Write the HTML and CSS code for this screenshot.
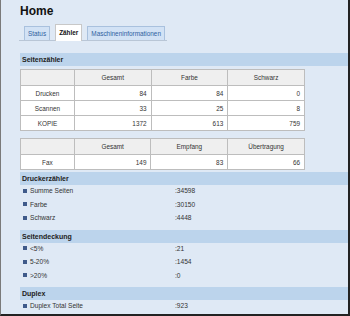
FILE: index.html
```html
<!DOCTYPE html>
<html lang="de">
<head>
  <meta charset="UTF-8" />
  <title>Home</title>
  <link rel="stylesheet" href="styles.css">
</head>
<body>

<div class="page">
  <h1>Home</h1>

  <div class="tabs">
    <span class="tab">Status</span>
    <span class="tab active">Zähler</span>
    <span class="tab">Maschineninformationen</span>
  </div>

  <!-- Seitenzähler -->
  <div class="section-head">Seitenzähler</div>
  <table class="counter">
    <tr class="head">
      <td class="label"></td><td>Gesamt</td><td>Farbe</td><td>Schwarz</td>
    </tr>
    <tr>
      <td class="label">Drucken</td><td class="num">84</td><td class="num">84</td><td class="num">0</td>
    </tr>
    <tr>
      <td class="label">Scannen</td><td class="num">33</td><td class="num">25</td><td class="num">8</td>
    </tr>
    <tr>
      <td class="label">KOPIE</td><td class="num">1372</td><td class="num">613</td><td class="num">759</td>
    </tr>
  </table>

  <table class="counter fax">
    <tr class="head">
      <td class="label"></td><td>Gesamt</td><td>Empfang</td><td>Übertragung</td>
    </tr>
    <tr>
      <td class="label">Fax</td><td class="num">149</td><td class="num">83</td><td class="num">66</td>
    </tr>
  </table>

  <!-- Druckerzähler -->
  <div class="section-head">Druckerzähler</div>
  <ul class="list">
    <li><span class="key">Summe Seiten</span><span class="val">:34598</span></li>
    <li><span class="key">Farbe</span><span class="val">:30150</span></li>
    <li><span class="key">Schwarz</span><span class="val">:4448</span></li>
  </ul>

  <div class="section-head">Seitendeckung</div>
  <ul class="list">
    <li><span class="key">&lt;5%</span><span class="val">:21</span></li>
    <li><span class="key">5-20%</span><span class="val">:1454</span></li>
    <li><span class="key">&gt;20%</span><span class="val">:0</span></li>
  </ul>

  <div class="section-head">Duplex</div>
  <ul class="list">
    <li><span class="key">Duplex Total Seite</span><span class="val">:923</span></li>
  </ul>
</div>

</body>
</html>
```

FILE: styles.css
```css
* {
  box-sizing: border-box;
}

html, body {
  margin: 0;
  height: 100%;
}

body {
  font-family: "Liberation Sans", Arial, sans-serif;
  color: #333;
  overflow: hidden;
}

.page {
  height: 316px;
  background: #dfe9f5;
  border-left: 1px solid #7a7a7a;
  border-right: 2px solid #222;
  border-bottom: 2px solid #222;
  padding: 4px 0 0 18px;
  overflow: hidden;
}

h1 {
  margin: 0;
  font-size: 12px;
  line-height: 14px;
  font-weight: bold;
  color: #111;
  padding-left: 1px;
}

/* Reiter */
.tabs {
  display: flex;
  align-items: flex-end;
  gap: 5px;
  width: 148px;
  margin-top: 6px;
  padding-left: 5px;
  border-bottom: 1px solid #b9c6d6;
  height: 17px;
}

.tab {
  font-size: 6.4px;
  line-height: 13px;
  padding: 0 3px;
  color: #2f5f9f;
  background: #d2e2f5;
  border: 1px solid #a9c1de;
  border-bottom: none;
  height: 14px;
}

.tab.active {
  background: #fff;
  color: #111;
  font-weight: bold;
  border-color: #c8c8c8;
  height: 17px;
  line-height: 16px;
  margin-bottom: -1px;
}

.section-head {
  margin-top: 12px;
  margin-left: 1px;
  height: 13px;
  line-height: 13px;
  background: #bcd4ec;
  font-size: 7px;
  font-weight: bold;
  color: #222;
  padding-left: 2px;
}

.counter {
  margin-top: 3px;
  margin-left: 1px;
  border-collapse: collapse;
  width: 285px;
  font-size: 6.4px;
  background: #fff;
}

.counter td {
  border: 1px solid #bdbdbd;
  height: 15px;
  padding: 0 4px;
  text-align: center;
}

.counter .head td {
  background: #efefef;
  height: 16px;
}

.counter .label {
  width: 54px;
}

.counter .num {
  text-align: right;
  width: 77px;
}

.counter.fax {
  margin-top: 7px;
}

.counter.fax + .section-head {
  margin-top: 2px;
}

.list {
  list-style: none;
  margin: 0 0 0 1px;
  padding: 0;
}

.list li {
  display: flex;
  height: 13.5px;
  align-items: center;
  font-size: 6.6px;
  color: #333;
}

.list li:first-child {
  margin-top: -1px;
}

.key {
  width: 155px;
  position: relative;
  padding-left: 10px;
}

.key::before {
  content: "";
  position: absolute;
  left: 3px;
  top: 50%;
  width: 4px;
  height: 4px;
  margin-top: -2px;
  background: #3f5a8a;
}

.list + .section-head {
  margin-top: 5px;
}
```
